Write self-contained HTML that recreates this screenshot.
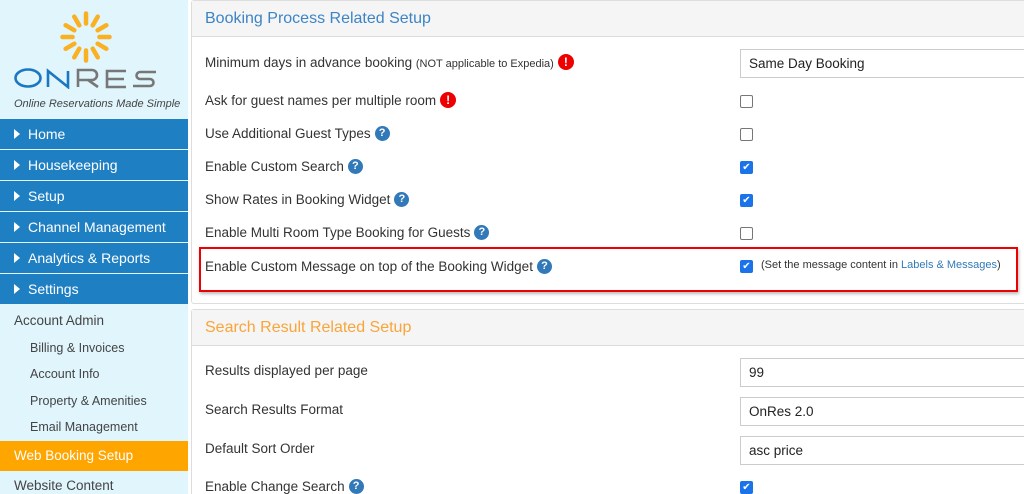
<html><head><style>
html,body{margin:0;width:1024px;height:494px;overflow:hidden}
body{background:#fff;font-family:"Liberation Sans",sans-serif;position:relative}
.sb{position:absolute;left:0;top:0;width:188px;height:494px;background:#e0f5fc}
.m{position:absolute;left:0;width:188px;height:30px;background:#1f7fc3;color:#fff;font-size:14px;line-height:30px;box-sizing:border-box;padding-left:14px}
.m:before{content:"";display:inline-block;border-left:6px solid #fff;border-top:5px solid transparent;border-bottom:5px solid transparent;margin-right:8px}
.s{position:absolute;left:30px;font-size:12.5px;color:#444}
.p{position:absolute;left:191px;width:840px;border:1px solid #ddd;border-radius:3px;background:#fff}
.h{height:35px;background:#f5f5f5;border-bottom:1px solid #ddd;font-size:16px;line-height:36px;padding-left:13px}
.r{position:absolute;left:205px;font-size:13.5px;color:#333;line-height:17px}
.q{display:inline-block;width:15px;height:15px;border-radius:50%;background:#3179b8;color:#fff;font-size:11px;font-weight:bold;text-align:center;line-height:15px;vertical-align:top;margin-top:1px;margin-left:4px}
.e{display:inline-block;width:16px;height:16px;border-radius:50%;background:#e00;color:#fff;font-size:12px;font-weight:bold;text-align:center;line-height:16px;vertical-align:top;margin-top:0;margin-left:4px}
.cb{position:absolute;left:740px;width:11px;height:11px;border:1px solid #777;border-radius:2px;background:#fff}
.ck{background:#1a73e8;border-color:#1a73e8;color:#fff;font-size:10px;line-height:11px;text-align:center}
.in{position:absolute;left:740px;width:300px;height:27px;border:1px solid #ccc;font-size:13.5px;line-height:27px;padding-left:8px;color:#222}
</style></head><body>
<div class="sb">
<svg style="position:absolute;left:58px;top:9px" width="56" height="56" viewBox="-25 -25 50 50">
<g stroke="#f9b022" stroke-width="4" stroke-linecap="round">
<line x1="0" y1="-12" x2="0" y2="-21"/><line x1="0" y1="-12" x2="0" y2="-21" transform="rotate(30)"/><line x1="0" y1="-12" x2="0" y2="-21" transform="rotate(60)"/><line x1="0" y1="-12" x2="0" y2="-21" transform="rotate(90)"/><line x1="0" y1="-12" x2="0" y2="-21" transform="rotate(120)"/><line x1="0" y1="-12" x2="0" y2="-21" transform="rotate(150)"/><line x1="0" y1="-12" x2="0" y2="-21" transform="rotate(180)"/><line x1="0" y1="-12" x2="0" y2="-21" transform="rotate(210)"/><line x1="0" y1="-12" x2="0" y2="-21" transform="rotate(240)"/><line x1="0" y1="-12" x2="0" y2="-21" transform="rotate(270)"/><line x1="0" y1="-12" x2="0" y2="-21" transform="rotate(300)"/><line x1="0" y1="-12" x2="0" y2="-21" transform="rotate(330)"/></g></svg>
<svg style="position:absolute;left:14px;top:67px" width="144" height="22" viewBox="0 0 144 22" fill="none" stroke-width="2.6">
<ellipse cx="14" cy="11" rx="12.5" ry="8.5" stroke="#1a78c2"/>
<path d="M34 20V4l20 16V4" stroke="#1a78c2"/>
<path d="M64 20V3h14a5 5 0 0 1 0 10H64M74 13l10 7" stroke="#777"/>
<path d="M112 4H93v16h19M93 12h17" stroke="#777"/>
<path d="M142 5h-16a3.5 3.5 0 0 0 0 7h10a3.5 3.5 0 0 1 0 7h-17" stroke="#777"/>
</svg>
<div style="position:absolute;left:14px;top:98px;font-size:11px;font-style:italic;color:#444">Online Reservations Made Simple</div>
<div class="m" style="top:119px">Home</div>
<div class="m" style="top:150px">Housekeeping</div>
<div class="m" style="top:181px">Setup</div>
<div class="m" style="top:212px">Channel Management</div>
<div class="m" style="top:243px">Analytics &amp; Reports</div>
<div class="m" style="top:274px">Settings</div>
<div class="s" style="left:14px;top:313px;font-size:13.5px">Account Admin</div>
<div class="s" style="top:341px">Billing &amp; Invoices</div>
<div class="s" style="top:367px">Account Info</div>
<div class="s" style="top:394px">Property &amp; Amenities</div>
<div class="s" style="top:420px">Email Management</div>
<div style="position:absolute;top:441px;left:0;width:188px;height:30px;background:#ffa500;color:#fff;font-size:13.5px;line-height:30px;padding-left:14px;box-sizing:border-box">Web Booking Setup</div>
<div class="s" style="left:14px;top:478px;font-size:13.5px">Website Content</div>
</div>
<div class="p" style="top:0;height:302px"><div class="h" style="color:#3d84c6">Booking Process Related Setup</div></div>
<div class="p" style="top:309px;height:200px"><div class="h" style="color:#f9a53a">Search Result Related Setup</div></div>
<div class="in" style="top:49px">Same Day Booking</div>
<div class="r" style="top:54px">Minimum days in advance booking <span style="font-size:11px">(NOT applicable to Expedia)</span><span class="e">!</span></div>
<div class="r" style="top:92px">Ask for guest names per multiple room<span class="e">!</span></div><div class="cb" style="top:95px"></div>
<div class="r" style="top:125px">Use Additional Guest Types<span class="q">?</span></div><div class="cb" style="top:128px"></div>
<div class="r" style="top:158px">Enable Custom Search<span class="q">?</span></div><div class="cb ck" style="top:161px">✔</div>
<div class="r" style="top:191px">Show Rates in Booking Widget<span class="q">?</span></div><div class="cb ck" style="top:194px">✔</div>
<div class="r" style="top:224px">Enable Multi Room Type Booking for Guests<span class="q">?</span></div><div class="cb" style="top:227px"></div>
<div style="position:absolute;left:199px;top:247px;width:815px;height:41px;border:2px solid #e00;box-shadow:1px 2px 3px #bbb"></div>
<div class="r" style="top:258px">Enable Custom Message on top of the Booking Widget<span class="q">?</span></div><div class="cb ck" style="top:260px">✔</div>
<div style="position:absolute;left:761px;top:259px;font-size:11px;color:#333">(Set the message content in <span style="color:#3179b8">Labels &amp; Messages</span>)</div>
<div class="r" style="top:362px">Results displayed per page</div><div class="in" style="top:358px">99</div>
<div class="r" style="top:401px">Search Results Format</div><div class="in" style="top:397px">OnRes 2.0</div>
<div class="r" style="top:440px">Default Sort Order</div><div class="in" style="top:436px">asc price</div>
<div class="r" style="top:478px">Enable Change Search<span class="q">?</span></div><div class="cb ck" style="top:481px">✔</div>
</body></html>
